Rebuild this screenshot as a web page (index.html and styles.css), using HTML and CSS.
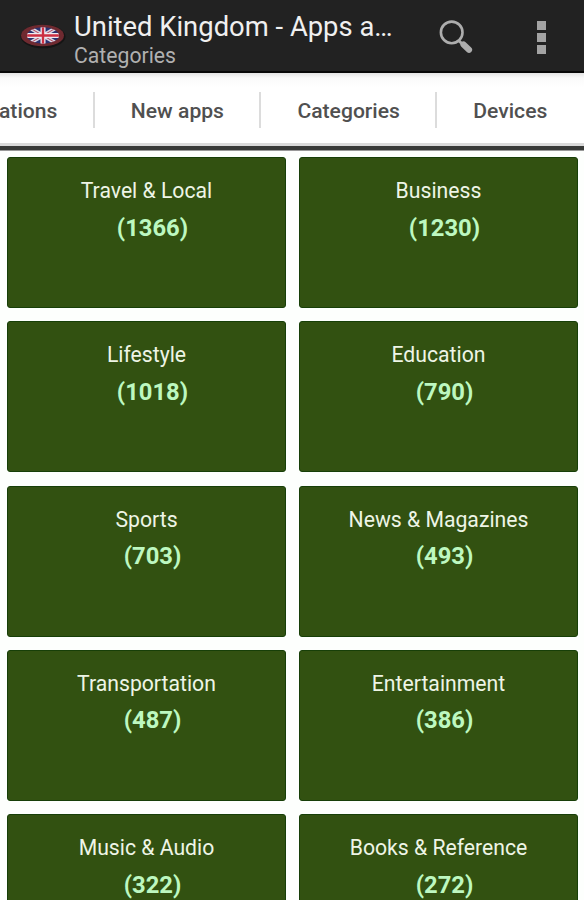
FILE: index.html
```html
<!DOCTYPE html>
<html lang="en">
<head>
    <meta charset="UTF-8">
    <meta name="viewport" content="width=device-width, initial-scale=1.0">
    <title>United Kingdom - Apps</title>
    <link rel="stylesheet" href="styles.css">
</head>
<body>

    <header class="action-bar">
        <!-- flag -->
        <svg class="flag" width="46" height="26" viewBox="0 0 46 26">
            <defs>
                <clipPath id="oval"><ellipse cx="23" cy="12.5" rx="16" ry="8.2"/></clipPath>
            </defs>
            <ellipse cx="23" cy="13.5" rx="22.5" ry="11.8" fill="#151515"/>
            <ellipse cx="22.5" cy="12.5" rx="21.5" ry="10.8" fill="#6f2a30"/>
            <g clip-path="url(#oval)">
                <rect width="46" height="26" fill="#2b3270"/>
                <path d="M3 1L43 24M43 1L3 24" stroke="#d9d5e2" stroke-width="4"/>
                <path d="M3 1L43 24M43 1L3 24" stroke="#b8485c" stroke-width="1"/>
                <path d="M23 0V26M0 12.5H46" stroke="#eeeaf0" stroke-width="5"/>
                <path d="M23 0V26M0 12.5H46" stroke="#cc2f42" stroke-width="2.4"/>
            </g>
        </svg>
        <div class="titles">
            <h1 class="title">United Kingdom - Apps a…</h1>
            <p class="subtitle">Categories</p>
        </div>
        <svg class="search" width="36" height="36" viewBox="0 0 36 36">
            <circle cx="12.7" cy="13.4" r="10.8" fill="none" stroke="#adadad" stroke-width="2.6"/>
            <path d="M19.5 21.5L24 25.5" stroke="#adadad" stroke-width="3"/>
            <path d="M24.5 25.5L30 30.8" stroke="#adadad" stroke-width="6.2" stroke-linecap="round"/>
        </svg>
        <div class="overflow">
            <span></span>
            <span></span>
            <span></span>
        </div>
    </header>

    <nav class="tabs">
        <a class="tab">ations</a>
        <a class="tab">New apps</a>
        <a class="tab">Categories</a>
        <a class="tab">Devices</a>
    </nav>

    <main class="grid">
        <div class="card"><div class="name">Travel &amp; Local</div><div class="count">(1366)</div></div>
        <div class="card"><div class="name">Business</div><div class="count">(1230)</div></div>
        <div class="card"><div class="name">Lifestyle</div><div class="count">(1018)</div></div>
        <div class="card"><div class="name">Education</div><div class="count">(790)</div></div>
        <div class="card"><div class="name">Sports</div><div class="count">(703)</div></div>
        <div class="card"><div class="name">News &amp; Magazines</div><div class="count">(493)</div></div>
        <div class="card"><div class="name">Transportation</div><div class="count">(487)</div></div>
        <div class="card"><div class="name">Entertainment</div><div class="count">(386)</div></div>
        <div class="card"><div class="name">Music &amp; Audio</div><div class="count">(322)</div></div>
        <div class="card"><div class="name">Books &amp; Reference</div><div class="count">(272)</div></div>
    </main>

</body>
</html>
```

FILE: styles.css
```css
* {
    box-sizing: border-box;
}

body {
    display: flex;
    flex-direction: column;
    margin: 0;
    height: 900px;
    overflow: hidden;
    background-color: #fdfffd;
    font-family: Roboto, Arial, sans-serif;
}

/* top bar */
.action-bar {
    display: flex;
    flex-shrink: 0;
    height: 73px;
    padding-left: 20px;
    background-color: #222222;
    border-bottom: 2px solid #080808;
}

.flag {
    margin-top: 23px;
}

.titles {
    width: 373px;
    padding: 11px 0 0 8px;
}

.title {
    margin: 0;
    font-size: 27.4px;
    line-height: 33px;
    font-weight: normal;
    color: #f0f0f0;
    white-space: nowrap;
}

.subtitle {
    margin: 0;
    font-size: 21.2px;
    line-height: 24px;
    color: #b0b0b0;
}

.search {
    margin-top: 19px;
}

.overflow {
    display: flex;
    flex-direction: column;
    gap: 3px;
    margin: 21px 0 0 62px;
}

.overflow span {
    width: 9px;
    height: 9px;
    background-color: #a3a3a3;
}

/* tab strip */
.tabs {
    display: flex;
    flex-shrink: 0;
    height: 78px;
    padding-top: 19px;
    background: linear-gradient(#e4e4e4, #fafafa 5px, #ffffff 14px);
    border-bottom: 1px solid #999999;
    box-shadow: inset 0 -4px #383a38, inset 0 -7px #dadada;
}

.tab {
    height: 36px;
    padding: 0 35.5px 0 36px;
    border-right: 2px solid #dcdcdc;
    font-size: 21.1px;
    line-height: 38px;
    font-weight: 500;
    color: #505050;
    white-space: nowrap;
}

.tab:first-child {
    padding-left: 0;
    margin-left: -1px;
}

.tab:last-child {
    border-right: none;
}

/* categories */
.grid {
    display: grid;
    flex: 1;
    min-height: 0;
    overflow: hidden;
    grid-template-columns: 279px 279px;
    grid-auto-rows: 151px;
    gap: 13.25px 13px;
    padding: 6px 7px 0;
}

.card {
    padding-top: 20px;
    background-color: #325111;
    border: 1px solid #173f08;
    border-radius: 3px;
    text-align: center;
}

.name {
    font-size: 21.2px;
    line-height: 26px;
    color: #eef5e6;
}

.count {
    padding: 8.5px 0 0 12px;
    font-size: 23.8px;
    line-height: 31px;
    font-weight: bold;
    color: #bdf8c0;
}
```
